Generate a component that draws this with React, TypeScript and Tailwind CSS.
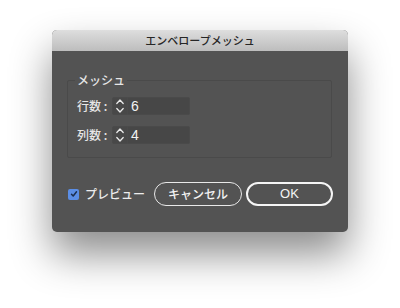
const font = { fontFamily: '"Noto Sans CJK JP", "Liberation Sans", sans-serif' };

function Spinner() {
  return (
    <div className="flex h-[18px] w-[16px] items-center justify-center rounded-l-[2px] border border-[#4a4a4a] bg-[#484848]">
      <svg width="10" height="16" viewBox="0 0 10 16" fill="none" stroke="#e8e8e8" strokeWidth="1.3" strokeLinecap="round" strokeLinejoin="round">
        <path d="M1.8 5.5 L5 2 L8.2 5.5" />
        <path d="M1.8 10.5 L5 14 L8.2 10.5" />
      </svg>
    </div>
  );
}

function Field({ label, value }: { label: string; value: string }) {
  return (
    <div className="flex items-center">
      <span className="w-[35px] text-[12px] font-medium text-[#e6e6e6]">{label}</span>
      <Spinner />
      <div className="flex h-[18px] w-[62px] items-center rounded-r-[2px] border border-l-0 border-[#4a4a4a] bg-[#474747] pl-[3px] text-[14px] text-[#f2f2f2]" style={{ fontFamily: '"Liberation Sans", sans-serif' }}>
        {value}
      </div>
    </div>
  );
}

export default function App() {
  return (
    <div className="h-[308px] w-[400px] bg-white pt-[30px] pl-[52px]" style={font}>
      <div className="flex h-[202px] w-[296px] flex-col overflow-hidden rounded-[5px] bg-[#535353] shadow-[0_22px_40px_rgba(0,0,0,0.45)]">
        {/* Title bar */}
        <div className="flex h-[21px] items-center justify-center bg-gradient-to-b from-[#dedede] to-[#bdbdbd] text-[11px] font-medium text-[#262626]">
          エンベロープメッシュ
        </div>

        {/* Body */}
        <div className="flex flex-col px-[15px] pt-[29px]">
          <div className="relative h-[78px] w-[265px] rounded-[2px] border border-[#4a4a4a]">
            <span className="absolute top-[-11px] left-[7px] bg-[#535353] px-[2px] text-[12px] font-medium leading-[20px] text-[#e6e6e6]">
              メッシュ
            </span>
            <div className="flex flex-col gap-[11px] pt-[16px] pl-[9px]">
              <Field label="行数 :" value="6" />
              <Field label="列数 :" value="4" />
            </div>
          </div>

          <div className="mt-[24px] flex items-center whitespace-nowrap">
            <div className="ml-[1px] flex h-[11px] w-[11px] shrink-0 items-center justify-center rounded-[2px] bg-[#5b8ee6]">
              <svg width="8" height="8" viewBox="0 0 8 8" fill="none" stroke="#1c2e4e" strokeWidth="1.5" strokeLinecap="round" strokeLinejoin="round">
                <path d="M1.5 4.2 L3.2 6 L6.5 1.8" />
              </svg>
            </div>
            <span className="ml-[6px] w-[62px] shrink-0 text-[12px] font-medium text-[#ececec]">プレビュー</span>
            <button className="ml-[7px] flex h-[24px] w-[88px] shrink-0 items-center justify-center rounded-full border-[1.5px] border-[#e8e8e8] text-[12px] font-medium text-[#f2f2f2]">
              キャンセル
            </button>
            <button className="ml-[4px] flex h-[24px] w-[87px] shrink-0 items-center justify-center rounded-full border-2 border-[#f5f5f5] text-[13px] text-[#f5f5f5]" style={{ fontFamily: '"Liberation Sans", sans-serif' }}>
              OK
            </button>
          </div>
        </div>
      </div>
    </div>
  );
}
